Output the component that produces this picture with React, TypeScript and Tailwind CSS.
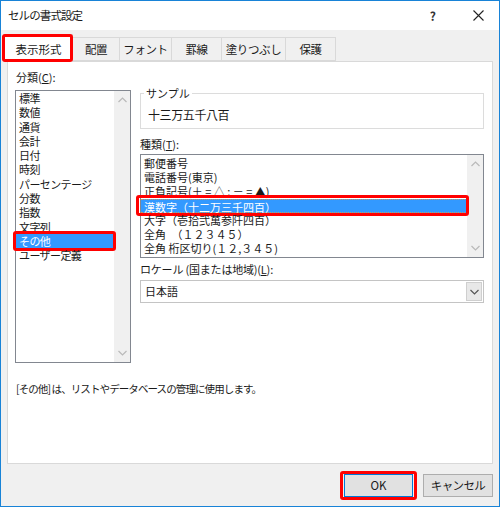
import React from "react";

const font = { fontFamily: '"Noto Sans CJK JP", "Noto Sans", sans-serif' };

function RedBox({ className }: { className: string }) {
  return <div className={`pointer-events-none absolute border-[3px] border-[#ff0000] rounded-[3px] ${className}`} />;
}

function Chevron({ up, color = "#b9b9b9" }: { up?: boolean; color?: string }) {
  return (
    <svg width="9" height="6" viewBox="0 0 9 6">
      <path d={up ? "M0.5 5 L4.5 1 L8.5 5" : "M0.5 1 L4.5 5 L8.5 1"} fill="none" stroke={color} strokeWidth="1.2" />
    </svg>
  );
}

function ScrollBar() {
  return (
    <div className="flex w-[16px] flex-col items-center justify-between self-stretch bg-[#f0f0f0] py-[6px]">
      <Chevron up />
      <Chevron />
    </div>
  );
}

const categories = ["標準", "数値", "通貨", "会計", "日付", "時刻", "パーセンテージ", "分数", "指数", "文字列", "その他", "ユーザー定義"];
const types = [
  "郵便番号",
  "電話番号(東京)",
  "正負記号(＋ = △ ; － = ▲)",
  "漢数字（十二万三千四百）",
  "大字（壱拾弐萬参阡四百）",
  "全角　（１２３４５）",
  "全角 桁区切り(１２,３４５)",
];

export default function App() {
  const tabs = [
    { label: "配置", w: "w-[47px]" },
    { label: "フォント", w: "w-[52px]" },
    { label: "罫線", w: "w-[50px]" },
    { label: "塗りつぶし", w: "w-[64px]" },
    { label: "保護", w: "w-[50px]" },
  ];
  return (
    <div style={font} className="flex h-[507px] w-[500px] flex-col border border-[#1883d7] bg-[#f0f0f0] text-[11px] text-[#1a1a1a]">
      {/* Title bar */}
      <div className="flex h-[29px] shrink-0 items-center bg-white pl-[7px]">
        <span className="text-[11.5px] tracking-[-0.9px]">セルの書式設定</span>
        <span className="ml-auto mr-[37px] text-[12px] font-bold text-[#333]">?</span>
        <span className="mr-[15px]">
          <svg width="11" height="11" viewBox="0 0 11 11">
            <path d="M0.5 0.5 L10.5 10.5 M10.5 0.5 L0.5 10.5" stroke="#222" strokeWidth="1.1" />
          </svg>
        </span>
      </div>

      {/* Tabs */}
      <div className="mt-[3px] flex h-[28px] shrink-0 items-end pl-[3px]">
        <div className="relative -mb-px flex h-[28px] w-[69px] items-center justify-center border border-b-0 border-[#d9d9d9] bg-white pt-[2px] text-[11.5px]">
          表示形式
          <RedBox className="-left-[3px] -right-[1px] -top-[1px] bottom-0" />
        </div>
        {tabs.map((t) => (
          <div
            key={t.label}
            className={`flex h-[24px] ${t.w} items-center justify-center border border-l-0 border-[#d9d9d9] bg-[#f0f0f0] pt-[1px] text-[11.5px] tracking-[-0.4px]`}
          >
            {t.label}
          </div>
        ))}
      </div>

      {/* Panel */}
      <div className="ml-[6px] flex h-[403px] w-[486px] shrink-0 flex-col border border-[#d9d9d9] bg-white px-[7px] pt-[8px]">
        <div className="flex gap-[9px]">
          {/* Left column */}
          <div className="flex w-[116px] flex-col">
            <div className="h-[14px] pl-[1px] leading-[14px]">
              分類(<span className="underline">C</span>):
            </div>
            <div className="mt-[6px] flex h-[273px] border border-[#828790] bg-white">
              <div className="flex-1">
                {categories.map((c) => (
                  <div
                    key={c}
                    className={`relative h-[14.3px] whitespace-nowrap pl-[3px] leading-[14.3px] tracking-[-0.6px] ${c === "その他" ? "bg-[#3399ff] text-white" : ""}`}
                  >
                    {c}
                    {c === "その他" && <RedBox className="-left-[3px] -right-[2px] -top-[3px] -bottom-[3px]" />}
                  </div>
                ))}
              </div>
              <ScrollBar />
            </div>
          </div>

          {/* Right column */}
          <div className="flex w-[344px] flex-col">
            {/* Sample group */}
            <div className="relative mt-[23px] h-[36px] border border-[#dcdcdc]">
              <span className="absolute -top-[8px] left-[3px] bg-white px-[2px] leading-[14px]">サンプル</span>
              <div className="pl-[7px] pt-[13px] text-[12px] leading-[16px] tracking-[-0.4px]">十三万五千八百</div>
            </div>
            <div className="mt-[8px] h-[14px] leading-[14px]">
              種類(<span className="underline">T</span>):
            </div>
            <div className="mt-[3px] flex h-[104px] border border-[#828790] bg-white">
              <div className="flex-1 pt-[1px]">
                {types.map((t) => (
                  <div
                    key={t}
                    className={`relative h-[14.2px] whitespace-nowrap pl-[3px] leading-[14.2px] ${
                      t.startsWith("漢数字") ? "border-y border-dotted border-[#c89a60] bg-[#3399ff] leading-[12.2px] text-white" : ""
                    }`}
                  >
                    {t}
                    {t.startsWith("漢数字") && <RedBox className="-left-[5px] -right-[2px] -top-[5px] -bottom-[4px]" />}
                  </div>
                ))}
              </div>
              <ScrollBar />
            </div>
            <div className="mt-[4px] h-[14px] leading-[14px] tracking-[-0.2px]">
              ロケール (国または地域)(<span className="underline">L</span>):
            </div>
            <div className="mt-[4px] flex h-[23px] items-center border border-[#c4c4c4] bg-white">
              <span className="flex-1 pl-[4px]">日本語</span>
              <div className="mr-px flex h-[19px] w-[16px] items-center justify-center border border-[#cfcfcf] bg-[#e8e8e8]">
                <Chevron color="#555" />
              </div>
            </div>
          </div>
        </div>
        <div className="mt-[19px] pl-[1px] text-[10.5px] leading-[14px] tracking-[-0.9px]">[その他] は、リストやデータベースの管理に使用します。</div>
      </div>

      {/* Buttons */}
      <div className="mt-[10px] flex justify-end gap-[10px] pr-[6px]">
        <div className="relative flex h-[23px] w-[69px] items-center justify-center border border-[#0078d7] bg-[#e1e1e1] text-[11.5px]">
          OK
          <RedBox className="-left-[5px] -right-[5px] -top-[4px] -bottom-[4px]" />
        </div>
        <div className="flex h-[23px] w-[70px] items-center justify-center border border-[#adadad] bg-[#e1e1e1] text-[11.5px] tracking-[-0.6px]">
          キャンセル
        </div>
      </div>
    </div>
  );
}
